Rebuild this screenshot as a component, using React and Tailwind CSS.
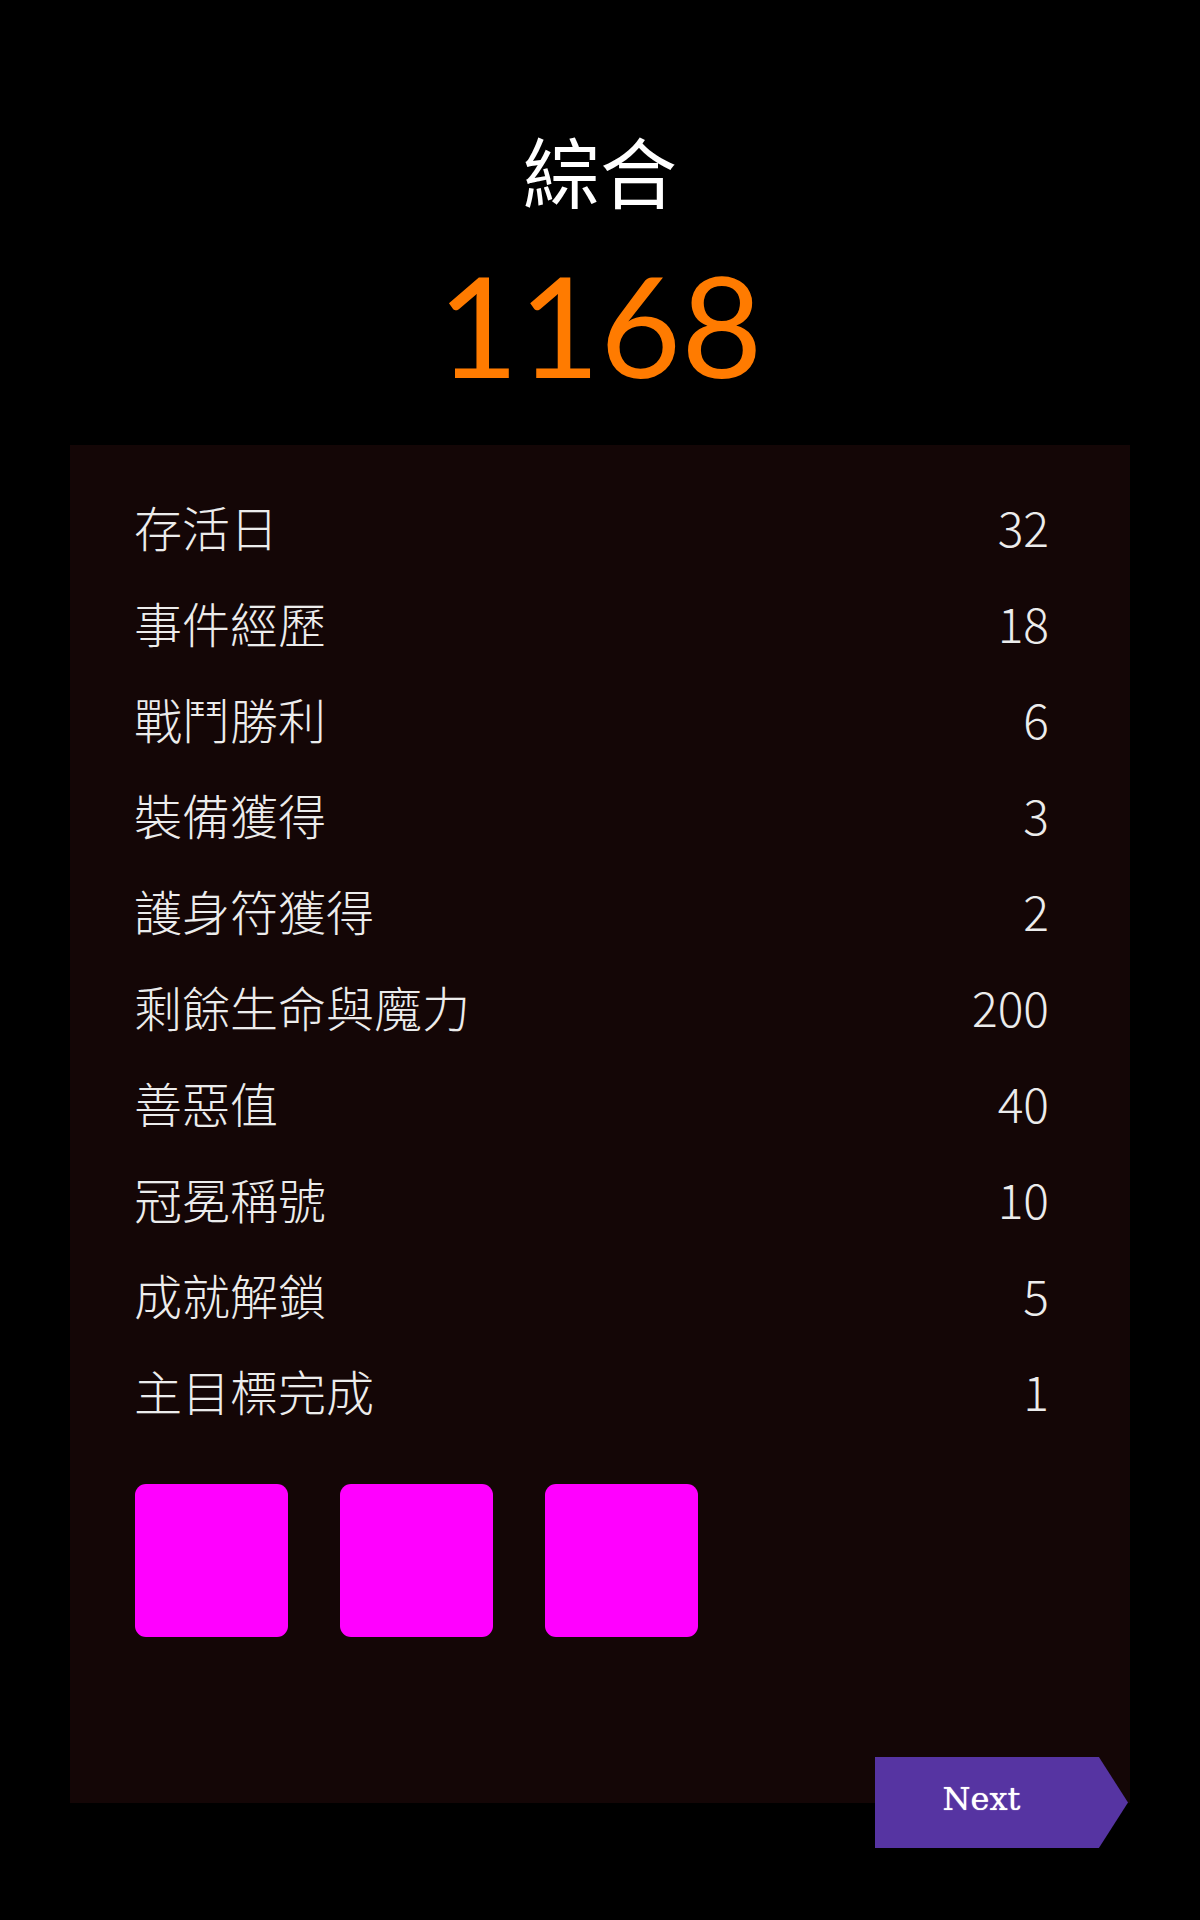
const stats = [
  { label: '存活日', value: 32 },
  { label: '事件經歷', value: 18 },
  { label: '戰鬥勝利', value: 6 },
  { label: '裝備獲得', value: 3 },
  { label: '護身符獲得', value: 2 },
  { label: '剩餘生命與魔力', value: 200 },
  { label: '善惡值', value: 40 },
  { label: '冠冕稱號', value: 10 },
  { label: '成就解鎖', value: 5 },
  { label: '主目標完成', value: 1 },
];

const App = () => {
  return (
    <div className="min-h-[1920px] w-[1200px] bg-black pt-[130px] text-white">
      <h1 className="h-[80px] text-center text-[77px] leading-[80px] font-normal font-['Noto_Sans_CJK_TC',sans-serif]">
        綜合
      </h1>
      <div className="mt-[42px] h-[145px] text-center text-[140px] leading-[145px] text-[#ff7b00] font-['Lato',sans-serif]">
        1168
      </div>

      <div className="relative mx-[70px] mt-[48px] bg-[#140606] pt-[33px] pb-[166px] pl-[64px] pr-[81px]">
        {stats.map((s) => (
          <div
            key={s.label}
            className="flex h-[96px] items-center justify-between text-[48px] leading-none font-light text-[#ececec] font-['Noto_Sans_CJK_TC_Light','Noto_Sans_CJK_TC_DemiLight','Noto_Sans_CJK_TC',sans-serif]"
          >
            <span>{s.label}</span>
            <span>{s.value}</span>
          </div>
        ))}

        {/* reward slots */}
        <div className="mt-[46px] ml-[1px] flex gap-[52px]">
          <div className="h-[153px] w-[153px] rounded-[11px] bg-[#ff00ff]"></div>
          <div className="h-[153px] w-[153px] rounded-[11px] bg-[#ff00ff]"></div>
          <div className="h-[153px] w-[153px] rounded-[11px] bg-[#ff00ff]"></div>
        </div>

        <button className="absolute -bottom-[45px] right-[2px] flex h-[91px] w-[253px] items-center bg-[#5634a2] pr-[40px] pb-[8px] [clip-path:polygon(0_0,88.5%_0,100%_50%,88.5%_100%,0_100%)]">
          <span className="w-full text-center text-[32px] text-white font-['DejaVu_Serif',serif] [text-shadow:0_0_1px_rgba(255,255,255,0.9)]">
            Next
          </span>
        </button>
      </div>
    </div>
  );
};

export default App;
